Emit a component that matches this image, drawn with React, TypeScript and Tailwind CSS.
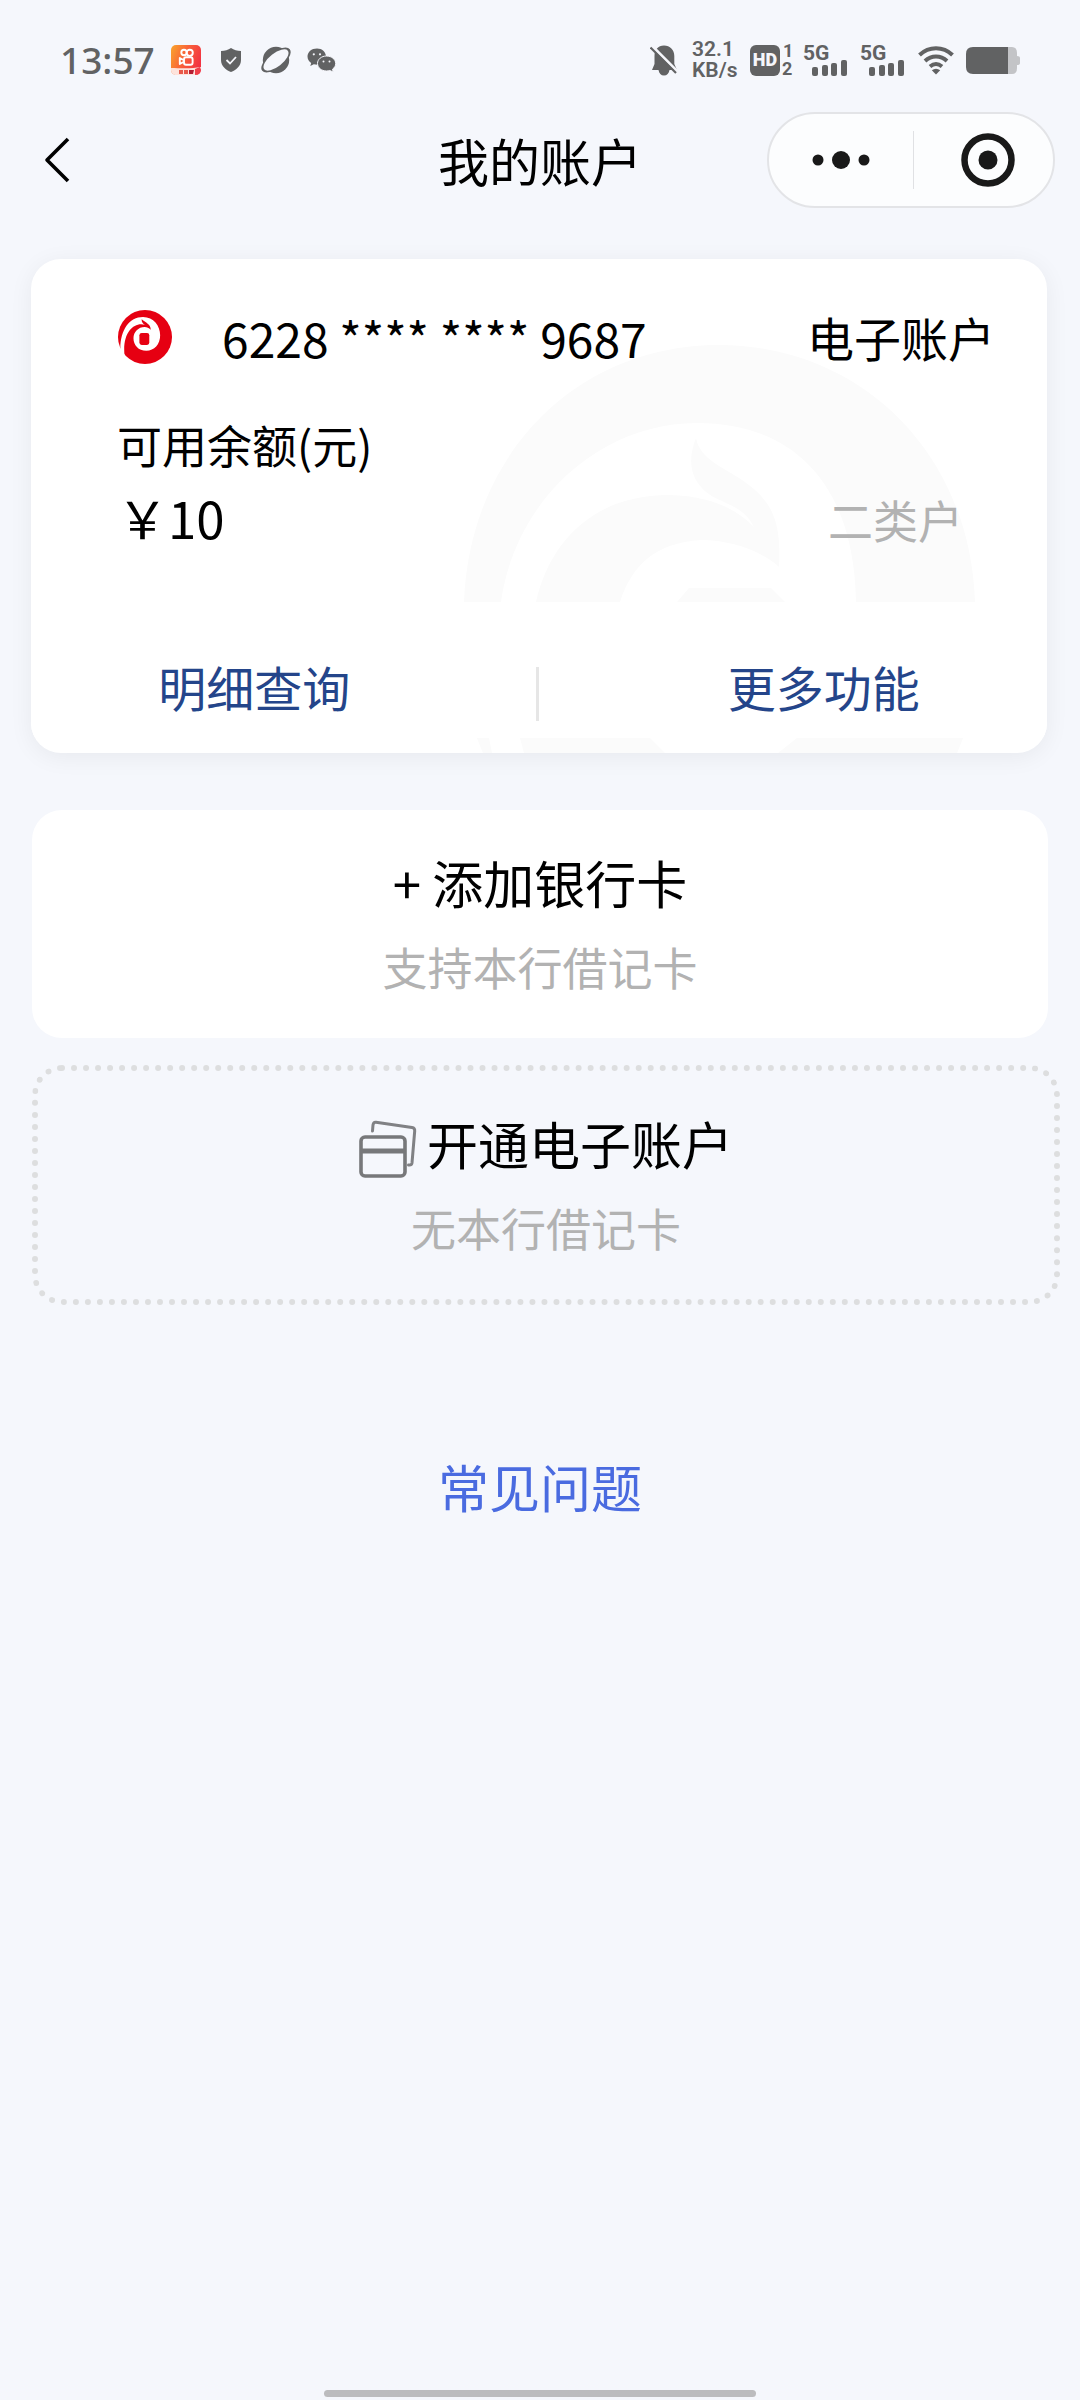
function KuaishouIcon() {
  return (
    <svg className="h-[30px] w-[30px]" viewBox="0 0 30 30" aria-hidden="true">
      <defs>
        <linearGradient id="ks" x1="0" y1="0.1" x2="1" y2="0.5">
          <stop offset="0" stopColor="#f9a12c" />
          <stop offset="0.5" stopColor="#f9613a" />
          <stop offset="1" stopColor="#f23342" />
        </linearGradient>
      </defs>
      <rect width="30" height="30" rx="5" fill="url(#ks)" />
      <path d="M0 23 C8 23 20 24 30 22 L29 25 L25 30 H4 Q0 29 0 25Z" fill="#fde3dc" />
      <path d="M8 25h4v4h-4zM13 25h4v4h-4z" fill="#e8584a" />
      <path d="M18 25h5l-1 4h-4z" fill="#b51d33" />
      <path d="M24 24l5-2v5q-1 3-5 3z" fill="#f0404a" />
      <g fill="none" stroke="#fff" strokeWidth="1.9">
        <circle cx="13" cy="7.5" r="2.7" />
        <circle cx="18.7" cy="7.8" r="3.1" />
        <rect x="13" y="12.3" width="8.6" height="7.4" rx="2" />
        <path d="M12.5 15 L8.8 13 V19 L12.5 17" strokeLinejoin="round" />
      </g>
    </svg>
  );
}

function ShieldIcon() {
  return (
    <svg className="h-6 w-5" viewBox="0 0 20 24" aria-hidden="true">
      <path d="M10 0 C13 2 16 3 20 3 V12 C20 18 15 22 10 24 C5 22 0 18 0 12 V3 C4 3 7 2 10 0Z" fill="#616263" />
      <path d="M5.5 12 L9 15.5 L15 9" fill="none" stroke="#f5f6fb" strokeWidth="1.8" />
    </svg>
  );
}

function PlanetIcon() {
  return (
    <svg className="h-[28px] w-[30px] overflow-visible" viewBox="0 0 30 28" aria-hidden="true">
      <circle cx="15" cy="14" r="13.2" fill="#616263" />
      <ellipse cx="15" cy="14" rx="17.5" ry="8" transform="rotate(-38 15 14)" fill="#616263" />
      <ellipse cx="15" cy="14" rx="15" ry="6.6" transform="rotate(-38 15 14)" fill="#f5f6fb" />
    </svg>
  );
}

function WechatIcon() {
  return (
    <svg className="h-6 w-[29px]" viewBox="0 0 29 24" aria-hidden="true">
      <path d="M10 0.5 C4.5 .5 .5 4 .5 8.6 C.5 11.3 2 13.6 4.2 15 L3.3 18 L6.8 16.2 C8 16.5 9 16.7 10.5 16.7 C15.5 16.5 19 13 19 8.6 C19 4 15 .5 10 .5Z" fill="#616263" />
      <path d="M19.5 8 C14.5 8 10.5 11.3 10.5 15.5 C10.5 19.7 14.5 23 19.5 23 C20.7 23 21.8 22.8 22.8 22.5 L26.3 24 L25.5 21.2 C27.5 19.8 28.7 17.8 28.7 15.5 C28.7 11.3 24.5 8 19.5 8Z" fill="#616263" stroke="#f5f6fb" strokeWidth="1" />
      <g fill="#f5f6fb">
        <circle cx="6.8" cy="6.3" r="1.1" />
        <circle cx="13" cy="6.3" r="1.1" />
        <circle cx="16.5" cy="13.5" r="1" />
        <circle cx="22.5" cy="13.5" r="1" />
      </g>
    </svg>
  );
}

function MutedBellIcon() {
  return (
    <svg className="h-[31px] w-[28px]" viewBox="0 0 28 31" aria-hidden="true">
      <path d="M14 0.5 C20 .5 24.3 5 24.3 11 V19 L27 25 H19.5 C19 28.5 17 30.5 14 30.5 C11 30.5 9 28.5 8.5 25 H2 L4.5 19 V11 C4.5 5 8 .5 14 .5Z" fill="#616263" />
      <path d="M2 1 L28 27" stroke="#f5f6fb" strokeWidth="3" />
      <path d="M0.5 2.5 L26 28" stroke="#616263" strokeWidth="2.2" />
    </svg>
  );
}

function Signal() {
  return (
    <div className="flex h-[31px] w-11 flex-col">
      <span className="h-[15px] text-[21px] leading-[16px] font-bold">5G</span>
      <svg className="ml-[9px] h-4 w-[35px]" viewBox="0 0 35 16" fill="#616263" aria-hidden="true">
        <rect x="0" y="7" width="6" height="9" rx="2" />
        <rect x="10" y="5" width="6" height="11" rx="2" />
        <rect x="19" y="3" width="6" height="13" rx="2" />
        <rect x="29" y="0" width="6" height="16" rx="2" />
      </svg>
    </div>
  );
}

function WifiIcon() {
  return (
    <svg className="h-[30px] w-9" viewBox="0 0 36 30" fill="none" stroke="#616263" strokeWidth="4" aria-hidden="true">
      <path d="M1.5 10 C11 1 25 1 34.5 10" />
      <path d="M7 16 C13.5 10 22.5 10 29 16" />
      <path d="M12 21.5 C16 18.2 20 18.2 24 21.5" />
      <path d="M13.8 25.3 Q18 22.3 22.2 25.3 L18 29.5Z" fill="#616263" stroke="none" />
    </svg>
  );
}

function BatteryIcon() {
  return (
    <svg className="h-[27px] w-[54px]" viewBox="0 0 54 27" aria-hidden="true">
      <path d="M42 0 H46 Q51 0 51 6 V9 Q54 9 54 11 V16 Q54 18 51 18 V21 Q51 27 46 27 H42Z" fill="#c3c4c7" />
      <path d="M7 0 H42 V27 H7 Q0 27 0 20 V7 Q0 0 7 0Z" fill="#616263" />
    </svg>
  );
}

function StatusBar() {
  return (
    <div className="flex h-[112px] items-center justify-between px-[60px] pt-2 text-[#616263] [font-family:Roboto,sans-serif]">
      <div className="flex items-center">
        <time className="mr-4 text-[37px] leading-[40px] font-medium [font-family:'Noto_Sans',sans-serif]">13:57</time>
        <div className="flex items-center gap-5">
          <KuaishouIcon />
          <ShieldIcon />
          <div className="flex items-center gap-4">
            <PlanetIcon />
            <WechatIcon />
          </div>
        </div>
      </div>
      <div className="flex items-center">
        <MutedBellIcon />
        <div className="ml-[14px] flex w-[46px] flex-col text-[21px] leading-[21px] font-semibold">
          <span>32.1</span>
          <span>KB/s</span>
        </div>
        <div className="ml-3 flex items-center gap-[2px]">
          <span className="flex h-[31px] w-[30px] items-center justify-center rounded-[6px] bg-[#616263] text-[18px] leading-[18px] font-black text-[#f5f6fb]">HD</span>
          <span className="flex w-3 flex-col text-[18px] leading-[18px] font-bold">
            <span className="pl-[1px]">1</span>
            <span>2</span>
          </span>
        </div>
        <div className="ml-[9px] flex gap-[13px]">
          <Signal />
          <Signal />
        </div>
        <div className="ml-[14px] flex items-center gap-3">
          <WifiIcon />
          <BatteryIcon />
        </div>
      </div>
    </div>
  );
}

function NavBar() {
  return (
    <header className="grid h-24 grid-cols-[1fr_auto_1fr] items-center px-[25px]">
      <button type="button" aria-label="返回" className="ml-[13px] w-9">
        <svg className="h-12 w-9" viewBox="0 0 36 48" fill="none" stroke="#000" strokeWidth="3.6" aria-hidden="true">
          <path d="M30 3 L9 24 L30 45" strokeLinejoin="round" />
        </svg>
      </button>
      <h1 className="text-[51px] leading-[72px]">我的账户</h1>
      <div className="flex h-24 w-72 items-center justify-self-end rounded-full border-2 border-[#e3e4e7] bg-[#fcfdfe]">
        <button type="button" aria-label="更多" className="flex w-36 justify-center">
          <svg className="h-5 w-[58px]" viewBox="0 0 58 20" fill="#191919" aria-hidden="true">
            <circle cx="6" cy="10" r="5.5" />
            <circle cx="29" cy="10" r="9" />
            <circle cx="52" cy="10" r="5.5" />
          </svg>
        </button>
        <span className="h-[58px] w-[1px] bg-[#e0e1e4]" />
        <button type="button" aria-label="关闭" className="flex flex-1 justify-center pl-2">
          <svg className="h-[54px] w-[54px]" viewBox="0 0 54 54" aria-hidden="true">
            <circle cx="27" cy="27" r="23.5" fill="none" stroke="#191919" strokeWidth="6.5" />
            <circle cx="27" cy="27" r="9.5" fill="#191919" />
          </svg>
        </button>
      </div>
    </header>
  );
}

function BankLogo() {
  return (
    <svg className="h-14 w-14" viewBox="52 58 168 170" aria-hidden="true">
      <circle cx="136" cy="143" r="82" fill="#e60012" />
      <path d="M50 200 L62 194 C56 130 84 82 130 82 C162 82 182 108 182 138 C182 166 164 185 140 185 C116 185 101 168 101 147 C101 128 116 113 135 113 C142 113 148 116 153 121 C155 106 139 99 126 89 C125 97 129 102 136 106 C102 96 66 130 74 200 L70 214Z" fill="#fff" />
      <rect x="119" y="131" width="30" height="36" rx="7" fill="#e60012" />
    </svg>
  );
}

function Watermark() {
  return (
    <svg className="pointer-events-none absolute right-[72px] bottom-0 h-[410px] w-[512px]" viewBox="463 343 512 410" fill="#fbfbfb" aria-hidden="true">
      <path d="M464 602 C470 450 580 345 719 345 C858 345 970 450 975 602 H856 C854 480 790 423 697 423 C600 423 515 500 501 602Z" />
      <path d="M536 602 C550 540 595 495 669 495 C710 496 735 508 754 527 C745 510 734 507 722 501 C695 490 684 468 696 438 C700 460 725 468 742 480 C775 502 781 525 779 567 C760 550 730 540 701 540 C655 543 632 565 620 602Z" />
      <path d="M677 602 L689 588 H771 L785 602Z" />
      <path d="M477 738 H489 L492 753 H483Z M520 738 H650 L665 753 H524Z M797 738 H963 L957 753 H778Z" />
    </svg>
  );
}

function AccountCard() {
  return (
    <section className="relative mr-[33px] ml-[31px] overflow-hidden rounded-[30px] bg-white shadow-[0_4px_24px_rgba(0,0,0,0.06)]">
      <Watermark />
      <div className="relative pt-[38px] pr-[52px] pl-[86px]">
        <div className="flex h-20 items-center">
          <BankLogo />
          <p className="ml-[49px] flex-1 text-[48px] leading-[72px]">6228 **** **** 9687</p>
          <p className="text-[47px] leading-[72px]">电子账户</p>
        </div>
        <p className="mt-8 text-[45px] leading-[72px]">可用余额(元)</p>
        <div className="flex items-end justify-between pr-8">
          <p className="text-[51px] leading-[72px]">￥10</p>
          <p className="text-[45px] leading-[66px] text-[#b2b2b2]">二类户</p>
        </div>
      </div>
      <div className="relative mt-[49px] mb-[15px] flex h-[136px] items-center bg-white pt-8">
        <a href="#detail" className="flex-1 pr-[58px] text-center text-[48px] leading-[72px] text-[#24458a]">明细查询</a>
        <span className="mt-4 h-[54px] w-[3px] bg-[#e6e6e6]" />
        <a href="#more" className="flex-1 pl-[62px] text-center text-[48px] leading-[72px] text-[#24458a]">更多功能</a>
      </div>
    </section>
  );
}

function CardsIcon() {
  return (
    <svg className="mt-3 h-[58px] w-[58px]" viewBox="0 0 58 58" fill="none" stroke="#77787a" strokeWidth="3.6" aria-hidden="true">
      <path d="M13.5 11 L14 5 Q14.5 2 17 2.3 L53 7.5 Q56 8 55.7 11 L53 43 Q52.5 45.5 49.5 45" stroke="#808184" strokeLinecap="round" strokeWidth="3" />
      <rect x="2" y="17" width="44" height="39" rx="4" />
      <path d="M2 31 H46" strokeWidth="5" />
    </svg>
  );
}

export default function App() {
  return (
    <div className={'flex min-h-screen flex-col bg-[#f5f7fc] text-black [font-family:"Noto_Sans_CJK_SC","Noto_Sans",sans-serif]'}>
      <StatusBar />
      <NavBar />
      <main className="flex flex-1 flex-col pt-[51px]">
        <AccountCard />
        <button type="button" className="mx-8 mt-[57px] flex h-[228px] flex-col items-center rounded-[30px] bg-white">
          <span className="mt-[34px] text-[51px] leading-[76px]">+ 添加银行卡</span>
          <span className="mt-[11px] text-[45px] leading-[72px] text-[#b2b2b2]">支持本行借记卡</span>
        </button>
        <button type="button" className="mt-[27px] mr-[20px] ml-8 flex h-[240px] flex-col items-center rounded-[30px] border-6 border-dotted border-[#dddedf]">
          <span className="mt-[34px] flex items-center gap-[10px] text-[51px] leading-[76px]">
            <CardsIcon />
            开通电子账户
          </span>
          <span className="mt-[11px] text-[45px] leading-[72px] text-[#b2b2b2]">无本行借记卡</span>
        </button>
        <a href="#faq" className="mt-[143px] self-center text-[51px] leading-[76px] text-[#4a6be0]">常见问题</a>
      </main>
      <div className="mb-[3px] h-[7px] w-2/5 self-center rounded-full bg-[#bcbcbe]" />
    </div>
  );
}
